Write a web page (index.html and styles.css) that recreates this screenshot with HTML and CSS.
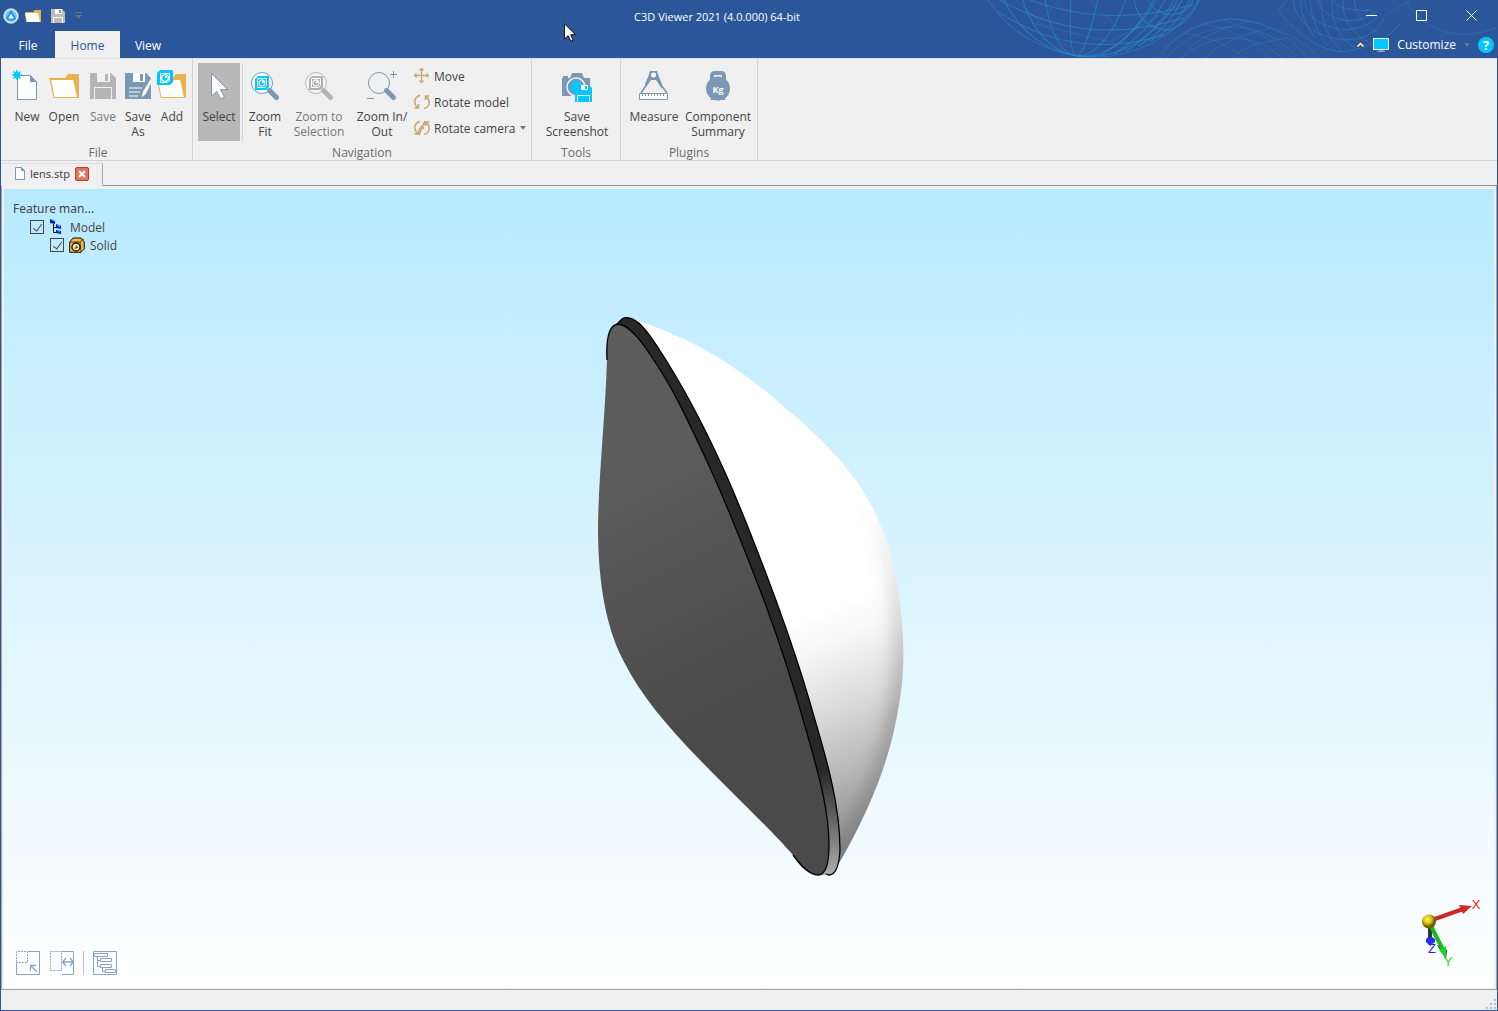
FILE: index.html
```html
<!DOCTYPE html>
<html lang="en">
<head>
<meta charset="utf-8">
<title>C3D Viewer 2021 (4.0.000) 64-bit</title>
<link rel="stylesheet" href="styles.css">
</head>
<body>
<div class="window">
  <header class="header">
    <svg class="globes" viewBox="970 0 528 58" width="528" height="58" fill="none" stroke="#2a8ccb" aria-hidden="true">
      <g stroke-opacity=".65" transform="rotate(8 1094 -70)">
        <circle cx="1094" cy="-70" r="127" stroke-opacity=".5"/>
        <ellipse cx="1094" cy="-70" rx="104" ry="127"/>
        <ellipse cx="1094" cy="-70" rx="78" ry="127"/>
        <ellipse cx="1094" cy="-70" rx="48" ry="127"/>
        <ellipse cx="1094" cy="-70" rx="16" ry="127"/>
        <path d="M985-10Q1094 38 1203-10M992 4Q1094 54 1196 4M1010 24Q1094 64 1178 24M980-26Q1094 20 1208-26"/>
      </g>
      <g stroke-opacity=".75">
        <path d="M1148 0Q1155 14 1172 15Q1190 12 1193 0M1134 0Q1140 30 1170 30Q1192 22 1198 0M1156 0Q1140 32 1100 56M1165 0Q1148 34 1114 54M1174 0Q1156 34 1126 51M1182 0Q1166 32 1138 46M1190 0Q1176 28 1150 41"/>
        <path d="M1016 0L1070 48M1060 0L1036 24L1110 42L1180 4M1090 0L1120 30" stroke-opacity=".35"/>
      </g>
      <g stroke-opacity=".35">
        <circle cx="1232" cy="110" r="91"/><circle cx="1232" cy="110" r="83"/><circle cx="1232" cy="110" r="72"/>
        <path d="M1160 58Q1180 24 1232 19Q1290 26 1320 58M1182 58Q1196 34 1250 21M1206 58Q1220 40 1270 28M1232 58Q1244 44 1288 38M1270 58Q1246 32 1204 24M1244 58Q1222 38 1184 33M1292 58Q1270 34 1224 20"/>
      </g>
      <g stroke-opacity=".5">
        <path d="M1287 0L1278 11Q1310 50 1344 52Q1382 46 1400 24M1293 0Q1298 34 1344 40Q1374 40 1384 18M1304 0Q1308 26 1346 30Q1370 28 1380 14M1318 0Q1322 18 1350 21Q1366 20 1378 10M1332 0Q1340 12 1372 10"/>
        <path d="M1300 0Q1302 24 1316 38M1310 0Q1312 28 1328 46M1321 0Q1320 32 1342 51M1332 0Q1330 32 1356 49M1343 0Q1342 28 1368 42M1354 0Q1356 22 1380 34"/>
        <path d="M1404 0Q1440 50 1496 28M1388 14L1410 0" stroke-opacity=".35"/>
      </g>
    </svg>
    <div class="titlebar">
      <div class="quick">
        <svg width="16" height="16" viewBox="0 0 16 16"><circle cx="8" cy="8" r="7.500" fill="#eef3f7" stroke="#8ba4b8"/><circle cx="8" cy="8" r="6" fill="#79c8ee"/><path d="M8 3.500L12 10.500Q8 13 4 10.500Z" fill="#fff" stroke="#129be8" stroke-width="2" stroke-linejoin="round"/></svg>
        <button class="quick-btn" aria-label="Open"><svg width="16" height="14" viewBox="0 0 16 14"><path d="M0 3H8L10 1H16V13H1Z" fill="#e8b34e"/><path d="M0 4H13L15 13H2Z" fill="#fff"/></svg></button>
        <button class="quick-btn quick-save" aria-label="Save"><svg width="14" height="14" viewBox="0 0 14 14"><path d="M0 0H11L14 3V14H0Z" fill="#bdbdbd"/><path d="M4 0H11V5H4Z" fill="#fff"/><path d="M8 1H10V4H8Z" fill="#999"/><path d="M2.500 14V8.500H11.500V14" fill="none" stroke="#fff"/></svg></button>
        <button class="quick-btn" aria-label="Customize quick access"><svg width="7" height="7" viewBox="0 0 7 7" fill="#667286"><path d="M0 0H7V1H0ZM0 3H7L3.500 7Z"/></svg></button>
      </div>
      <h1 class="title">C3D Viewer 2021 (4.0.000) 64-bit</h1>
      <div class="window-buttons">
        <button aria-label="Minimize"><svg width="12" height="12" viewBox="0 0 12 12"><path d="M0 5.500H11" stroke="#fff" stroke-width="1"/></svg></button>
        <button aria-label="Maximize"><svg width="12" height="12" viewBox="0 0 12 12"><path d="M.5.500H10.500V10.500H.5Z" fill="none" stroke="#fff"/></svg></button>
        <button aria-label="Close"><svg width="12" height="12" viewBox="0 0 12 12"><path d="M.5.500L10.500 10.500M10.500.500L.5 10.500" stroke="#fff"/></svg></button>
      </div>
    </div>
    <nav class="tabs">
      <button class="tab">File</button>
      <button class="tab tab-active">Home</button>
      <button class="tab">View</button>
      <div class="tab-tools">
        <svg width="9" height="7" viewBox="0 0 9 7"><path d="M1 6L4.500 2L8 6" fill="none" stroke="#4a4a4a" stroke-width="3"/><path d="M1.500 5.500L4.500 2.500L7.500 5.500" fill="none" stroke="#fff" stroke-width="1.500"/></svg>
        <svg width="16" height="14" viewBox="0 0 16 14"><path d="M.5.500H15.500V11.500H.5Z" fill="#00c8ff" stroke="#fff"/><path d="M6 12H10V13H12V14H4V13H6Z" fill="#8ba4b8"/></svg>
        <button class="customize">Customize <svg width="6" height="4" viewBox="0 0 6 4"><path d="M0 0H6L3 4Z" fill="#667286"/></svg></button>
        <button class="help" aria-label="Help">?</button>
      </div>
    </nav>
    <svg class="pointer" width="13" height="20" viewBox="0 0 13 20"><path d="M1.500.800V16L5.200 12.600L7.800 18.300L10.200 17.200L7.700 11.700H12.600Z" fill="#fff" stroke="#111"/></svg>
  </header>

  <main class="ribbon">
    <section class="group">
      <div class="group-body group-file">
        <button class="tool w-38"><svg width="30" height="32" viewBox="0 0 30 32"><path d="M6.500 5.500H18.500L24.500 12V29.500H5.500V5.500Z" fill="#fff" stroke="#7b98b4"/><path d="M18 5L25 12H18Z" fill="#7b98b4"/><path d="M5 0V10M0 5H10M1.500 1.500L8.500 8.500M8.500 1.500L1.500 8.500" stroke="#00c8ff" stroke-width="1.500"/><circle cx="5" cy="5" r="3" fill="#00c8ff"/></svg>New</button>
        <button class="tool w-36"><svg width="30" height="32" viewBox="0 0 30 32"><path d="M0 8H16L19 4H30V28H5Z" fill="#e8b34e"/><path d="M1.500 9.500H24.500L28.500 27.500H5Z" fill="#fff" stroke="#e8b34e"/></svg>Open</button>
        <button class="tool w-42 tool-off"><svg width="26" height="32" viewBox="0 0 26 32"><path d="M0 3H21L26 8V29H0Z" fill="#b5b5b5"/><path d="M7 3H20V12H7Z" fill="#f2f2f2"/><path d="M15 4H18V11H15Z" fill="#b5b5b5"/><path d="M4.500 29V17.500H21.500V29" fill="none" stroke="#f2f2f2"/></svg>Save</button>
        <button class="tool w-28"><svg width="26" height="32" viewBox="0 0 26 32"><path d="M0 3H21L26 8V29H0Z" fill="#7b98b4"/><path d="M8 3H20V12H8Z" fill="#fff"/><path d="M15 4H18V11H15Z" fill="#7b98b4"/><path d="M4 18H17M4 22H15M4 26H13" stroke="#fff"/><path d="M26 8L18 21L16 28L21 24L27 12Z" fill="#fff" stroke="#7b98b4" stroke-width=".6"/></svg>Save<br>As</button>
        <button class="tool w-40"><svg width="30" height="32" viewBox="0 0 30 32"><path d="M0 8H16L19 4H29V28H5Z" fill="#e8b34e"/><path d="M.5 9.500H23.500L27.500 27.500H4Z" fill="#fff" stroke="#e8b34e"/><path d="M3 0H15L16 1V12L13 15H0V3Z" fill="#00c8ff"/><path d="M3.500 3.500H12.500V10.500L10.500 12.500H3.500Z" fill="#00c8ff" stroke="#fff"/><circle cx="8" cy="8" r="4" fill="#fff"/><circle cx="8" cy="8" r="2.800" fill="#00c8ff"/><circle cx="9" cy="7" r="1.300" fill="#fff"/></svg>Add</button>
      </div>
      <h2 class="group-name group-name-file">File</h2>
    </section>
    <section class="group">
      <div class="group-body group-nav">
        <button class="tool tool-on w-42"><svg width="30" height="32" viewBox="0 0 30 32"><path d="M7.500 3.500L23.500 19.500H16.500L20.500 27L16.500 29L12.800 21.500L7.500 26Z" fill="#fff" stroke="#7b98b4"/></svg>Select</button>
        <span class="thin-line"></span>
        <button class="tool w-42"><svg width="30" height="32" viewBox="0 0 30 32"><circle cx="12" cy="13" r="10.500" fill="#fff" stroke="#7b98b4"/><path d="M19.500 20.500L26.500 27.500" stroke="#7b98b4" stroke-width="5" stroke-linecap="round"/><path d="M8 6H19V17L16 20H5V9Z" fill="#00c8ff"/><path d="M7.500 8.500H16.500V15.500L14.500 17.500H7.500Z" fill="none" stroke="#fff"/><circle cx="12" cy="13" r="3.500" fill="#fff"/><circle cx="12" cy="13" r="2.500" fill="#00c8ff"/><circle cx="13" cy="12" r="1.300" fill="#fff"/></svg>Zoom<br>Fit</button>
        <button class="tool tool-off w-66"><svg width="30" height="32" viewBox="0 0 30 32"><circle cx="12" cy="13" r="10.500" fill="#f5f5f5" stroke="#b5b5b5"/><path d="M19.500 20.500L26.500 27.500" stroke="#b5b5b5" stroke-width="5" stroke-linecap="round"/><path d="M8 6H19V17L16 20H5V9Z" fill="#b0b0b0"/><path d="M7.500 8.500H16.500V15.500L14.500 17.500H7.500Z" fill="none" stroke="#fff"/><circle cx="12" cy="13" r="3.500" fill="#fff"/><circle cx="12" cy="13" r="2.500" fill="#b0b0b0"/><circle cx="13" cy="12" r="1.300" fill="#fff"/></svg>Zoom to<br>Selection</button>
        <button class="tool w-60"><svg width="30" height="32" viewBox="0 0 30 32"><circle cx="12" cy="13" r="10.500" fill="none" stroke="#7b98b4"/><path d="M19.500 20.500L26.500 27.500" stroke="#7b98b4" stroke-width="5" stroke-linecap="round"/><path d="M23 4.500H30M26.500 1V8M0 28.500H7" stroke="#7b98b4"/></svg>Zoom In/<br>Out</button>
        <div class="small-tools">
          <button class="small-tool"><svg width="16" height="16" viewBox="0 0 16 16" fill="none" stroke="#c9a876" stroke-width="1.300"><path d="M7.500.5V14.500M.5 7.500H14.500M5.500 2.500L7.500.5L9.500 2.500M5.500 12.500L7.500 14.500L9.500 12.500M2.500 5.500L.5 7.500L2.500 9.500M12.500 5.500L14.500 7.500L12.500 9.500"/></svg>Move</button>
          <button class="small-tool"><svg width="16" height="16" viewBox="0 0 16 16" fill="none" stroke="#c9a876" stroke-width="1.600"><path d="M6 1.500C0 3-1 10 4 13.500M.5 14H4.500V10M10 14.500C16 13 17 6 12 2.500M15.500 2H11.500V6"/></svg>Rotate model</button>
          <button class="small-tool"><svg width="16" height="16" viewBox="0 0 16 16" fill="none" stroke="#c9a876" stroke-width="1.600"><path d="M6 1.500C0 3-1 10 4 13.500M.5 14H4.500V10M10 14.500C16 13 17 6 12 2.500M15.500 2H11.500V6M5 15L11 1M5 10L8 6L10 9"/></svg>Rotate camera <svg class="caret" width="6" height="4" viewBox="0 0 6 4"><path d="M0 0H6L3 4Z" fill="#777"/></svg></button>
        </div>
      </div>
      <h2 class="group-name">Navigation</h2>
    </section>
    <section class="group">
      <div class="group-body group-tools">
        <button class="tool w-80"><svg width="30" height="32" viewBox="0 0 30 32"><path d="M0 8H8L10 3H20L22 8H28V26H0Z" fill="#7b98b4"/><rect y="6" x="1" width="5" height="2" fill="#7b98b4"/><circle cx="14" cy="17" r="9" fill="#7b98b4" stroke="#f0f0f0" stroke-width="1.500"/><circle cx="14" cy="17" r="6" fill="#00c8ff"/><path d="M13 15H27L30 18V32H13Z" fill="#00c8ff"/><path d="M19 15H26V20H19Z" fill="#fff"/><path d="M23 16H25V19H23Z" fill="#00c8ff"/><path d="M15.500 32V25.500H27.500V32" fill="none" stroke="#fff"/></svg>Save<br>Screenshot</button>
      </div>
      <h2 class="group-name">Tools</h2>
    </section>
    <section class="group">
      <div class="group-body group-plugins">
        <button class="tool w-62"><svg width="30" height="32" viewBox="0 0 30 32"><path d="M11 1H18L20 7L23 14V19L17 10H12L6 18L6 14L9 7Z" fill="#7b98b4"/><path d="M12 8L2 23M17 8L28 23" stroke="#7b98b4" stroke-width="1.500"/><circle cx="14.500" cy="5" r="2.500" fill="#fff"/><path d="M.5 23.500H28.500V29.500H.5Z" fill="#fff" stroke="#7b98b4"/><path d="M3.500 24V26M6.500 24V26M9.500 24V26M12.500 24V26M15.500 24V26M18.500 24V26M21.500 24V26M24.500 24V26" stroke="#7b98b4"/></svg>Measure</button>
        <button class="tool w-66"><svg width="30" height="32" viewBox="0 0 30 32"><circle cx="15" cy="18.500" r="12" fill="#7b98b4"/><path d="M9 27H21L23 30H7Z" fill="#7b98b4"/><path d="M9 10V6Q9 3 12 3H18Q21 3 21 6V10" fill="none" stroke="#7b98b4" stroke-width="4"/><text x="15" y="23" class="kg">Kg</text></svg>Component<br>Summary</button>
      </div>
      <h2 class="group-name">Plugins</h2>
    </section>
  </main>

  <div class="doc-tabs">
    <div class="doc-tab">
      <svg width="10" height="13" viewBox="0 0 10 13"><path d="M.5.500H6.500L9.500 3.500V12.500H.5Z" fill="#fff" stroke="#7b98b4"/><path d="M6.500.500V3.500H9.500" fill="#7b98b4" stroke="#7b98b4"/></svg>
      lens.stp
      <button class="doc-close" aria-label="Close lens.stp"><svg width="8" height="8" viewBox="0 0 8 8"><path d="M1 1L7 7M7 1L1 7" stroke="#fff" stroke-width="2.200"/></svg></button>
    </div>
  </div>

  <div class="doc-frame">
    <div class="viewport">
      <svg class="scene" viewBox="4 189 1490 799" role="img" aria-label="Lens model">
        <defs>
          <linearGradient id="face" gradientUnits="userSpaceOnUse" x1="598" y1="480" x2="720" y2="720"><stop offset="0" stop-color="#5c5c5c"/><stop offset="1" stop-color="#4a4a4a"/></linearGradient>
          <linearGradient id="rim" gradientUnits="userSpaceOnUse" x1="0" y1="770" x2="0" y2="872"><stop offset="0" stop-color="#282828"/><stop offset=".5" stop-color="#666"/><stop offset="1" stop-color="#aaa"/></linearGradient>
          <linearGradient id="dome" gradientUnits="userSpaceOnUse" x1="800" y1="615" x2="890" y2="840"><stop offset="0" stop-color="#fff"/><stop offset=".15" stop-color="#f8f8f8"/><stop offset=".4" stop-color="#dcdcdc"/><stop offset=".7" stop-color="#b4b4b4"/><stop offset="1" stop-color="#808080"/></linearGradient>
          <linearGradient id="edge" gradientUnits="userSpaceOnUse" x1="0" y1="500" x2="0" y2="720"><stop offset="0" stop-color="#777" stop-opacity="0"/><stop offset="1" stop-color="#777" stop-opacity=".7"/></linearGradient>
          <filter id="soft" x="-30%" y="-10%" width="160%" height="120%"><feGaussianBlur stdDeviation="9"/></filter>
          <clipPath id="domeClip"><path d="M625 318C640 320 665 330 690 342C727 360 761 386 790 412C816 434 838 455 857 482C880 515 893 552 899 595C905 640 905 675 898 710C892 745 883 772 871 800C861 823 850 845 836 868Z"/></clipPath>
        </defs>
        <g clip-path="url(#domeClip)">
          <path d="M600 300H920V890H600Z" fill="url(#dome)"/>
          <path d="M857 482C880 515 893 552 899 595C905 640 905 675 898 710C892 745 883 772 871 800C861 823 850 845 836 868" fill="none" stroke="url(#edge)" stroke-width="14" filter="url(#soft)"/>
        </g>
        <path d="M617 324L622 319Q625 317 629 318C638 320 646 329 657 346C682 384 704 426 723 468C742 510 758 552 774 595C788 633 802 674 813 713C826 757 840 804 840 850C839 866 836 875 829 875L818 875Z" fill="url(#rim)"/>
        <path d="M617 324L622 319Q625 317 629 318C638 320 646 329 657 346C682 384 704 426 723 468C742 510 758 552 774 595C788 633 802 674 813 713C826 757 840 804 840 850C839 866 836 875 829 875L826 874" fill="none" stroke="#000" stroke-width="1.300"/>
        <path d="M618 324C630 325 643 343 657 365C676 394 690 425 705 457C726 502 744 548 762 595C779 640 794 687 807 733C817 769 829 808 829 845C829 865 825 875 818 875C809 875 801 866 793 855C772 831 724 785 700 760C668 727 641 696 623 660C603 621 598 572 598 525C599 470 605 420 607 360C606 340 609 325 618 324Z" fill="url(#face)"/>
        <path d="M607 360C606 340 609 325 618 324C630 325 643 343 657 365C676 394 690 425 705 457C726 502 744 548 762 595C779 640 794 687 807 733C817 769 829 808 829 845C829 865 825 875 818 875C809 875 801 866 793 855" fill="none" stroke="#000" stroke-width="1.300"/>
      </svg>

      <div class="tree">
        <div class="tree-title">Feature man...</div>
        <label class="tree-row"><input type="checkbox" checked>
          <svg width="16" height="16" viewBox="0 0 16 16"><path d="M4.500 5V13.500H8M4.500 8.500H8" fill="none" stroke="#111"/><path d="M1 0L6 2V5L1 4ZM7 5L12 7V10L7 9ZM7 11L12 12V15L7 14Z" fill="#0018d8"/><path d="M2 0L5 2M8 6L11 8M8 11L11 13" stroke="#25cfe0"/></svg>
          <span>Model</span></label>
        <label class="tree-row tree-child"><input type="checkbox" checked>
          <svg width="16" height="16" viewBox="0 0 16 16"><path d="M.7 5L4 1H12L15.300 5V12L12 15.300H.7Z" fill="#f5b942" stroke="#111"/><path d="M1 5H11L15 2M11 5L12 15" fill="none" stroke="#111" stroke-width=".7"/><circle cx="7" cy="10" r="4" fill="#ffe9a8" stroke="#111" stroke-width="1.300"/><path d="M5 12L8 8L9 11Z" fill="#555"/></svg>
          <span>Solid</span></label>
      </div>

      <div class="view-tools">
        <button aria-label="Resize panel"><svg width="24" height="24" viewBox="0 0 24 24" fill="none" stroke="#8aa6be"><path d="M12 .5H23.500V23.500H.5V12"/><path d="M.5 11V.5H11.500V11.500H.5" stroke-dasharray="2 1"/><path d="M21 21L15 15M14.500 20V14.500H20" stroke-width="1.300"/></svg></button>
        <button aria-label="Widen panel"><svg width="24" height="24" viewBox="0 0 24 24" fill="none" stroke="#8aa6be"><path d="M12 .5H23.500V23.500H12"/><path d="M11.500.5H.5V19.500H11.500Z" stroke-dasharray="2 1"/><path d="M13 11H23M16 7L12.500 11L16 15M20 7L23.500 11L20 15" stroke-width="1.300"/></svg></button>
        <span class="view-line"></span>
        <button aria-label="Model tree"><svg width="24" height="24" viewBox="0 0 24 24" fill="none" stroke="#8aa6be"><path d="M.5.5H23.500V23.500H.5Z"/><path d="M1.500 2.500H14.500V5.500H1.500ZM7.500 7.500H18.500V10.500H7.500ZM7.500 13.500H18.500V16.500H7.500ZM12.500 18.500H22.500V21.500H12.500ZM4.500 6V15.500H7M5 9.500H7M9.500 17V20.500H12"/></svg></button>
      </div>

      <svg class="axes" width="72" height="80" viewBox="1418 894 72 80" role="img" aria-label="Axes">
        <defs><radialGradient id="ball" cx=".4" cy=".35"><stop offset="0" stop-color="#fff36a"/><stop offset=".6" stop-color="#d8bf14"/><stop offset="1" stop-color="#6d6000"/></radialGradient></defs>
        <path d="M1430 924L1430 938" stroke="#333" stroke-width="4"/>
        <path d="M1426 939Q1430 934 1435 939L1435 942L1430 946L1426 942Z" fill="#2632e8"/>
        <text x="1432" y="953" class="axis-label axis-z">Z</text>
        <path d="M1437 945L1446 959L1447 950Z" fill="#222"/>
        <path d="M1430 924L1443 950" stroke="#18b818" stroke-width="4"/>
        <path d="M1439 950L1446 946L1446 958Z" fill="#18d818"/>
        <path d="M1432 920L1463 909" stroke="#c92a2a" stroke-width="4"/>
        <path d="M1459 905L1472 906L1463 914Z" fill="#d02a2a"/>
        <circle cx="1429" cy="921.500" r="7" fill="url(#ball)"/>
        <text x="1476" y="909" class="axis-label axis-x">X</text>
        <text x="1448" y="966" class="axis-label axis-y">Y</text>
      </svg>
    </div>
  </div>
  <footer class="status">
    <svg width="12" height="12" viewBox="0 0 12 12" fill="#bcbcbc"><path d="M9 1H11V3H9ZM9 5H11V7H9ZM9 9H11V11H9ZM5 5H7V7H5ZM5 9H7V11H5ZM1 9H3V11H1Z"/></svg>
  </footer>
</div>
</body>
</html>
```

FILE: styles.css
```css
* { box-sizing: border-box; }
body { margin: 0; }
body, button { font-family: "Open Sans", "Noto Sans", sans-serif; font-size: 12px; color: #444; }
button { margin: 0; padding: 0; border: 0; background: none; }
h1, h2 { margin: 0; font-weight: 400; }
svg { display: block; flex: none; }

.window { display: flex; flex-direction: column; min-height: 100vh; background: #f0f0f0; border: solid #2b579a; border-width: 0 1px 1px; }

.header { position: relative; background: #2b579a; color: #fff; }
.header button { color: #fff; }
.globes { position: absolute; top: 0; right: -1px; }
.titlebar { position: relative; display: flex; align-items: center; height: 31px; }
.quick { display: flex; align-items: center; gap: 6px; width: 86px; padding-left: 2px; }
.quick-save { margin: 0 4px; }
.title { flex: 1; padding-top: 2px; text-align: center; font-size: 11px; line-height: 16px; }
.window-buttons { display: flex; }
.window-buttons button { display: flex; align-items: center; justify-content: center; width: 50px; height: 30px; }
.tabs { position: relative; display: flex; height: 27px; }
.tab { width: 54px; padding-top: 2px; }
.header .tab-active { width: 65px; background: #f0f0f0; color: #2b579a; }
.tab:nth-child(3) { width: 56px; }
.tab-tools { display: flex; align-items: center; gap: 8px; margin-left: auto; padding-right: 3px; }
.customize { display: flex; align-items: center; gap: 8px; }
.help { width: 16px; height: 16px; border-radius: 50%; background: #00c8ff; font-size: 13px; font-weight: 700; line-height: 16px; }
.pointer { position: absolute; left: 562px; top: 23px; }

.ribbon { display: flex; height: 103px; border-top: 1px solid #e3e3e3; border-bottom: 1px solid #d2d2d2; }
.group { display: flex; flex-direction: column; padding-top: 4px; border-right: 1px solid #d2d2d2; }
.group-body { display: flex; height: 83px; }
.group-file { padding-left: 7px; }
.group-nav { padding: 0 4px 0 5px; }
.group-tools { padding: 0 3px 0 5px; }
.group-plugins { padding: 0 6px 0 2px; }
.group-name { font-size: 12px; line-height: 15px; text-align: center; color: #6a6a6a; }
.group-name-file { padding-left: 3px; }
.tool { display: flex; flex-direction: column; align-items: center; height: 78px; padding-top: 7px; line-height: 15px; white-space: nowrap; }
.tool svg { margin-bottom: 7px; }
.tool-on { background: #b8b8b8; }
.tool-off { color: #777; }
.w-28 { width: 28px; }
.w-36 { width: 36px; }
.w-38 { width: 38px; }
.w-40 { width: 40px; }
.w-42 { width: 42px; }
.w-60 { width: 60px; }
.w-62 { width: 62px; }
.w-66 { width: 66px; }
.w-80 { width: 80px; }
.thin-line { width: 1px; height: 78px; margin: 0 1px 0 2px; background: #d2d2d2; }
.small-tools { display: flex; flex-direction: column; padding-left: 2px; width: 115px; }
.small-tool { display: flex; align-items: center; gap: 4px; height: 26px; white-space: nowrap; }
.kg { font-size: 9px; font-weight: 700; text-anchor: middle; fill: #fff; }

.doc-tabs { display: flex; height: 25px; padding: 2px 0 0; }
.doc-tabs::after { content: ""; flex: 1; border-bottom: 1px solid #919191; }
.doc-tab { display: flex; align-items: center; gap: 5px; width: 102px; padding: 0 0 3px 14px; border: solid #aaa; border-width: 1px 1px 0 0; border-top-color: #dcdcdc; font-family: "Noto Sans", sans-serif; font-size: 11px; }
.doc-close { display: flex; align-items: center; justify-content: center; width: 14px; height: 14px; border: 1px solid #c23a26; border-radius: 2px; background: #e0745c; }

.doc-frame { display: flex; flex: 1; padding: 3px 2px 1px; border: solid #a5a5a5; border-width: 0 1px 1px; }
.viewport { position: relative; flex: 1; background: linear-gradient(#b8eaff, #fff); }
.scene { position: absolute; width: 100%; height: 100%; }
.tree { position: absolute; left: 9px; top: 10px; }
.tree-title { font-family: "Noto Sans", sans-serif; font-size: 12px; line-height: 19px; }
.tree-row { display: flex; align-items: center; gap: 5px; height: 18px; padding-left: 17px; }
.tree-child { padding-left: 37px; }
.tree-row input { appearance: none; display: grid; place-items: center; width: 14px; height: 14px; margin: 0; border: 1px solid #444; }
.tree-row input:checked::after { content: ""; width: 4px; height: 8px; margin-top: -2px; border: solid #444; border-width: 0 1px 1px 0; transform: rotate(35deg); }
.view-tools { position: absolute; left: 12px; bottom: 13px; display: flex; gap: 10px; align-items: center; }
.view-line { width: 1px; height: 24px; margin: 0 -1px; background: #c8c8c8; }
.axes { position: absolute; right: 4px; bottom: 14px; }
.axis-label { font: 13px "Liberation Sans", sans-serif; text-anchor: middle; }
.axis-x { fill: #f01818; }
.axis-y { fill: #18e018; }
.axis-z { fill: #2020e8; }

.status { display: flex; justify-content: flex-end; align-items: flex-end; height: 20px; }
```
